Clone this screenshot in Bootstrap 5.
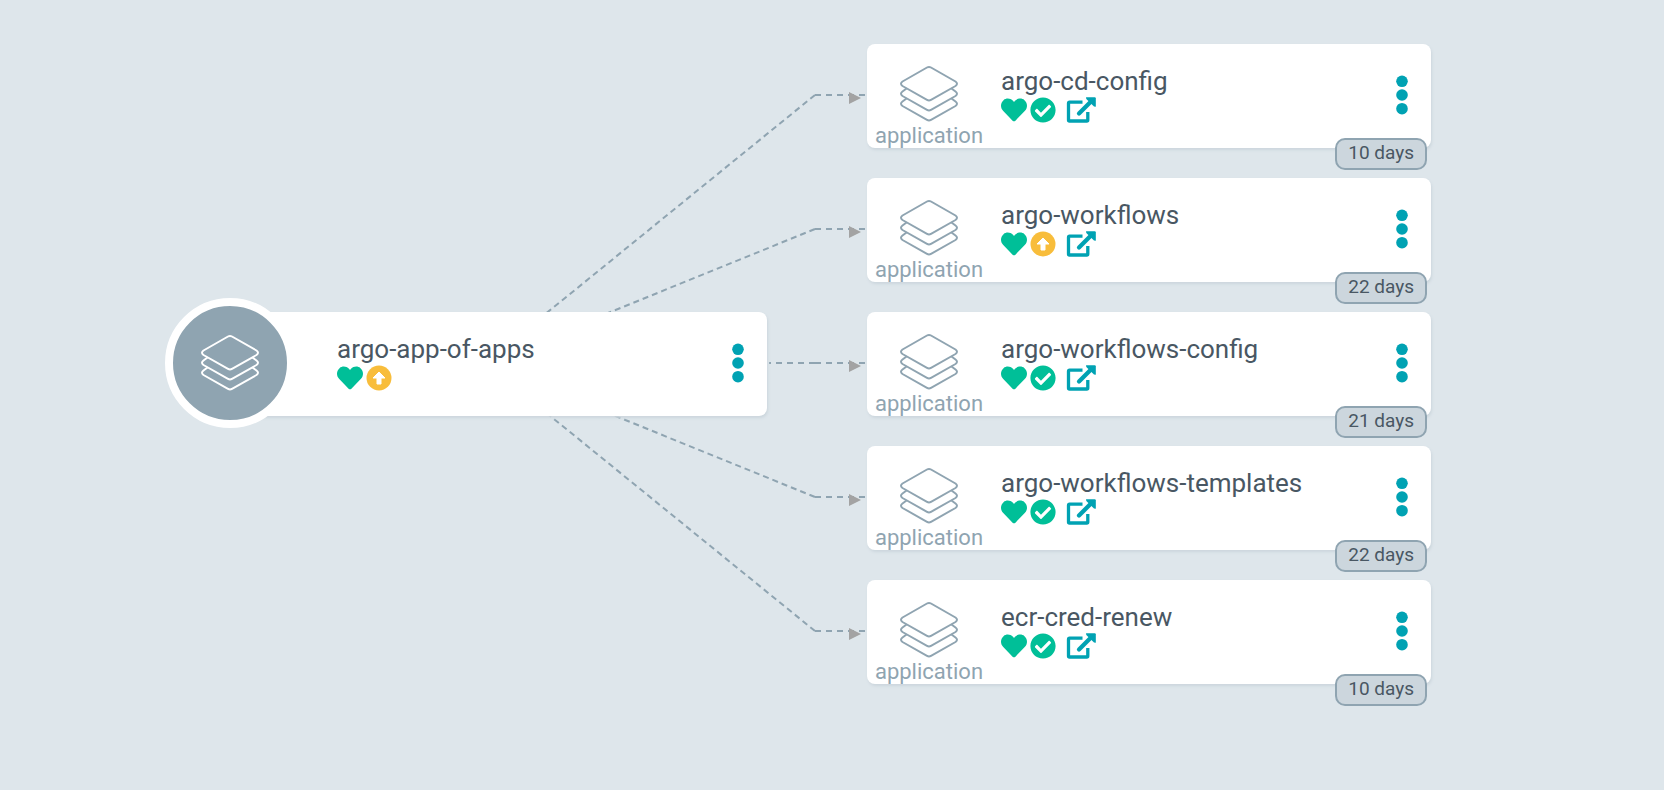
<!DOCTYPE html>
<html lang="en">
<head>
<meta charset="utf-8">
<meta name="viewport" content="width=device-width, initial-scale=1">
<title>argo-app-of-apps</title>
<link href="https://cdn.jsdelivr.net/npm/bootstrap@5.3.0/dist/css/bootstrap.min.css" rel="stylesheet">
<style>
  body { background: #dee6eb; font-family: Roboto, "Liberation Sans", sans-serif; color: #495763; }
  .tree { padding: 44px 233px 44px 203px; gap: 100px; min-width: 1300px; }
  .tree-level { flex: 1 1 0; gap: 30px; }
  .edges { z-index: 0; pointer-events: none; }
  .edges path { fill: none; stroke: #8fa4b1; stroke-width: 2px; }
  .edges .slant { stroke-dasharray: 6 4; }
  .edges .flat { stroke-dasharray: 6 5; }
  .edges .tip { fill: #a3a3a3; stroke: none; }
  .node { height: 104px; background: #fff; border-radius: 8px; box-shadow: 1px 2px 3px #ccd6dd; z-index: 1; }
  .node-kind { width: 124px; padding-top: 21px; color: #8fa4b1; font-size: 22px; line-height: 26px; }
  .node-body { padding: 22px 0 0 10px; }
  .node-name { font-size: 26px; line-height: 31px; font-weight: 400; }
  .node-state { height: 26px; gap: 3px; }
  .node-link { margin-left: 7px; }
  .node-menu { width: 24px; height: 44px; margin: 29px 17px 0 0; }
  .node-age { right: 4px; bottom: -22px; height: 32px; padding: 0 11px; border: 2px solid #8fa4b1; border-radius: 10px; background: #ccd6dd; font-size: 19px; line-height: 26px; }
  .root-icon { left: -38px; top: -14px; width: 130px; height: 130px; border: 8px solid #fff; background: #8fa4b1; color: #fff; }
</style>
</head>
<body>
<svg class="d-none" aria-hidden="true">
  <symbol id="layers" viewBox="0 0 60 58">
    <g fill="none" stroke="currentColor" stroke-width="2" stroke-linejoin="round">
      <path d="M28 2.500Q30 1.300 32 2.500L56.500 16.500Q59.500 18.700 56.500 21L32 34.800Q30 36 28 34.800L3.500 21Q.5 18.700 3.500 16.500Z"/>
      <path d="M7.500 23.500L3.500 26.500Q.5 28.700 3.500 31L28 44.800Q30 46 32 44.800L56.500 31Q59.500 28.700 56.500 26.500L52.500 23.500"/>
      <path d="M7.500 33.500L3.500 36.500Q.5 38.700 3.500 41L28 54.800Q30 56 32 54.800L56.500 41Q59.500 38.700 56.500 36.500L52.500 33.500"/>
    </g>
  </symbol>
  <symbol id="heart" viewBox="0 0 512 512"><path fill="#00bf98" d="M462.300 62.600C407.500 15.900 326 24.300 275.700 76.200L256 96.500l-19.700-20.300C186.100 24.300 104.500 15.900 49.700 62.600c-62.800 53.600-66.100 149.800-9.900 207.900l193.500 199.800c12.500 12.900 32.800 12.900 45.300 0l193.500-199.800c56.300-58.100 53-154.300-9.800-207.900z"/></symbol>
  <symbol id="synced" viewBox="0 0 512 512"><path fill="#00bf98" d="M504 256c0 136.967-111.033 248-248 248S8 392.967 8 256 119.033 8 256 8s248 111.033 248 248zM227.314 387.314l184-184c6.248-6.248 6.248-16.379 0-22.627l-22.627-22.627c-6.248-6.249-16.379-6.249-22.628 0L216 308.118l-70.059-70.059c-6.248-6.248-16.379-6.248-22.628 0l-22.627 22.627c-6.248 6.248-6.248 16.379 0 22.627l104 104c6.249 6.249 16.379 6.249 22.628.001z"/></symbol>
  <symbol id="outofsync" viewBox="0 0 26 26"><circle cx="13" cy="13" r="12.500" fill="#f8bd3b"/><path fill="#fff" stroke="#fff" stroke-width="1" stroke-linejoin="round" d="M13 7L19 13H15V19H11V13H7Z"/></symbol>
  <symbol id="external" viewBox="0 0 30 26"><g fill="none" stroke="#00a2b3" stroke-linejoin="round"><path stroke-width="3.300" d="M16.500 5.200H3.500Q2.500 5.200 2.500 6.200V23Q2.500 24 3.500 24H20.800Q21.800 24 21.800 23V15"/><path stroke-width="4.200" stroke-linecap="round" d="M13 16.500L26 3.500"/></g><path fill="#00a2b3" d="M20 .2H28.700Q29.800 .2 29.800 1.300V9.800L28 9.500L20.300 2Z"/></symbol>
  <symbol id="dots" viewBox="0 0 24 44"><g fill="#00a2b3"><circle cx="12" cy="8.300" r="5.800"/><circle cx="12" cy="22" r="5.800"/><circle cx="12" cy="35.700" r="5.800"/></g></symbol>
</svg>

<main class="tree d-flex align-items-center position-relative">
  <svg class="edges position-absolute top-0 start-0 w-100 h-100" aria-hidden="true"></svg>

  <div class="tree-level">
    <article class="node root position-relative d-flex">
      <div class="root-icon position-absolute rounded-circle d-flex align-items-center justify-content-center"><svg width="60" height="58"><use href="#layers"/></svg></div>
      <div class="node-kind"></div>
      <div class="node-body flex-grow-1">
        <h1 class="node-name m-0">argo-app-of-apps</h1>
        <div class="node-state d-flex"><svg width="26" height="26"><use href="#heart"/></svg><svg width="26" height="26"><use href="#outofsync"/></svg></div>
      </div>
      <button type="button" class="node-menu btn p-0 border-0 d-flex" aria-label="Actions"><svg width="24" height="44"><use href="#dots"/></svg></button>
    </article>
  </div>

  <div class="tree-level d-flex flex-column" id="apps"></div>
</main>

<script src="https://cdn.jsdelivr.net/npm/bootstrap@5.3.0/dist/js/bootstrap.bundle.min.js"></script>
<script>
  const apps = [
    ['argo-cd-config', 'synced', '10 days'],
    ['argo-workflows', 'outofsync', '22 days'],
    ['argo-workflows-config', 'synced', '21 days'],
    ['argo-workflows-templates', 'synced', '22 days'],
    ['ecr-cred-renew', 'synced', '10 days']
  ];
  document.getElementById('apps').innerHTML = apps.map(([name, sync, age]) => `
    <article class="node child position-relative d-flex">
      <div class="node-kind text-center"><svg class="d-block mx-auto" width="60" height="58"><use href="#layers"/></svg>application</div>
      <div class="node-body flex-grow-1">
        <h2 class="node-name m-0">${name}</h2>
        <div class="node-state d-flex"><svg width="26" height="26"><use href="#heart"/></svg><svg width="26" height="26"><use href="#${sync}"/></svg><a class="node-link d-flex" href="#" aria-label="Open application"><svg width="30" height="26"><use href="#external"/></svg></a></div>
      </div>
      <button type="button" class="node-menu btn p-0 border-0 d-flex" aria-label="Actions"><svg width="24" height="44"><use href="#dots"/></svg></button>
      <span class="node-age position-absolute">${age}</span>
    </article>`).join('');

  // Connect the centre of the root node with the left side of every child.
  function drawEdges() {
    const tree = document.querySelector('.tree').getBoundingClientRect();
    const root = document.querySelector('.root').getBoundingClientRect();
    const x0 = root.left + root.width / 2 - tree.left;
    const y0 = root.top + root.height / 2 - tree.top - 1;
    document.querySelector('.edges').innerHTML = [...document.querySelectorAll('.child')].map(el => {
      const box = el.getBoundingClientRect();
      const x = box.left - tree.left, y = box.top + box.height / 2 - tree.top - 1, bend = x - 52;
      const kind = y === y0 ? 'flat' : 'slant';
      const first = y === y0 ? `M${bend} ${y}H${bend - 46}` : `M${bend} ${y}L${x0} ${y0}`;
      return `<path class="${kind}" d="${first}"/><path class="flat" d="M${bend} ${y}H${x - 2}"/>
        <path class="tip" d="M${x - 18} ${y - 3}L${x - 6} ${y + 3}L${x - 18} ${y + 9}Z"/>`;
    }).join('');
  }
  drawEdges();
  window.addEventListener('resize', drawEdges);
</script>
</body>
</html>
